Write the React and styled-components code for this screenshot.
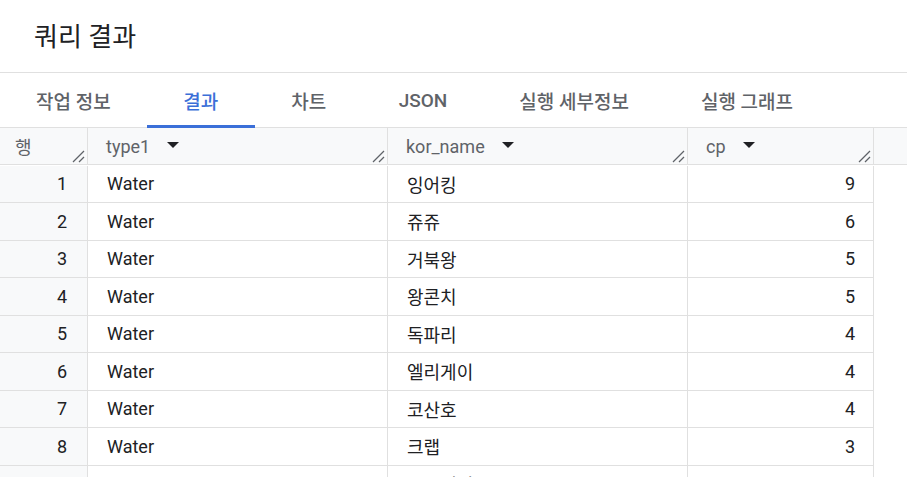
import React from 'react';
import styled, { createGlobalStyle } from 'styled-components';

const rows = [
  { type1: 'Water', name: '잉어킹', cp: 9 },
  { type1: 'Water', name: '쥬쥬', cp: 6 },
  { type1: 'Water', name: '거북왕', cp: 5 },
  { type1: 'Water', name: '왕콘치', cp: 5 },
  { type1: 'Water', name: '독파리', cp: 4 },
  { type1: 'Water', name: '엘리게이', cp: 4 },
  { type1: 'Water', name: '코산호', cp: 4 },
  { type1: 'Water', name: '크랩', cp: 3 },
  { type1: 'Water', name: '슈륙챙이', cp: 3 },
];

const tabs = ['작업 정보', '결과', '차트', 'JSON', '실행 세부정보', '실행 그래프'];

const GlobalStyle = createGlobalStyle`
  html, body {
    margin: 0;
    padding: 0;
    background: #fff;
    overflow: hidden;
  }
  body {
    font-family: Roboto, "Noto Sans CJK KR", sans-serif;
    color: #202124;
  }
`;

const Page = styled.div`
  width: 907px;
  height: 477px;
  overflow: hidden;
`;

const TitleBar = styled.div`
  display: flex;
  align-items: center;
  padding-left: 34px;
  border-bottom: 1px solid #e0e0e0;
  box-sizing: border-box;
  height: 73px;
`;

const Title = styled.h1`
  margin: 0;
  font-size: 26px;
  font-weight: 400;
  color: #202124;
  padding-bottom: 4px;
`;

const TabBar = styled.div`
  display: flex;
  height: 55px;
  border-bottom: 1px solid #e0e0e0;
  box-sizing: border-box;
`;

const Tab = styled.div`
  min-width: 108px;
  padding: 0 36px;
  box-sizing: border-box;
  display: flex;
  align-items: center;
  justify-content: center;
  font-size: 19px;
  font-weight: 500;
  color: ${(p) => (p.$active ? '#3b6fd8' : '#5f6368')};
  position: relative;
  padding-top: 1px;
  &::after {
    content: '';
    display: ${(p) => (p.$active ? 'block' : 'none')};
    position: absolute;
    left: 0;
    right: 0;
    bottom: -1px;
    height: 3px;
    background: #3b6fd8;
  }
`;

const Grid = styled.div`
  display: grid;
  grid-template-columns: 88px 300px 300px 186px 33px;
  grid-auto-rows: 37.5px;
`;

const HeadCell = styled.div`
  background: #f8f9fa;
  border-right: 1px solid #e0e0e0;
  border-bottom: 1px solid #e0e0e0;
  display: flex;
  align-items: center;
  padding-left: ${(p) => (p.$index ? '15px' : '18px')};
  font-size: 18px;
  color: #5f6368;
  position: relative;
  box-sizing: border-box;
  height: 37px;
  ${(p) => p.$index && 'align-items: flex-start; padding-top: 5px;'}
`;

const HeadFiller = styled.div`
  background: #f8f9fa;
  border-bottom: 1px solid #e0e0e0;
  height: 37px;
  box-sizing: border-box;
`;

const Caret = styled.span`
  margin-left: 17px;
  width: 0;
  height: 0;
  border-left: 6px solid transparent;
  border-right: 6px solid transparent;
  border-top: 6px solid #202124;
  margin-top: -2px;
`;

const Handle = styled.svg`
  position: absolute;
  right: 2px;
  bottom: 1px;
`;

const Cell = styled.div`
  background: ${(p) => (p.$index ? '#f8f9fa' : '#fff')};
  border-right: 1px solid #e0e0e0;
  border-bottom: 1px solid #e0e0e0;
  display: flex;
  align-items: center;
  justify-content: ${(p) => (p.$right ? 'flex-end' : 'flex-start')};
  padding: ${(p) => (p.$right ? (p.$index ? '0 20px 0 0' : '0 18px 0 0') : '0 0 0 19px')};
  font-size: 18px;
  color: #202124;
  box-sizing: border-box;
`;

const Filler = styled.div`
  background: #fff;
`;

const ResizeHandle = () => (
  <Handle width="13" height="13" viewBox="0 0 13 13">
    <path d="M1 12 L12 1" stroke="#5f6368" strokeWidth="1.3" />
    <path d="M7 12 L12 7" stroke="#5f6368" strokeWidth="1.3" />
  </Handle>
);

const Header = ({ label }) => (
  <HeadCell>
    {label}
    <Caret />
    <ResizeHandle />
  </HeadCell>
);

export default function App() {
  return (
    <Page>
      <GlobalStyle />
      <TitleBar>
        <Title>쿼리 결과</Title>
      </TitleBar>
      <TabBar>
        {tabs.map((t) => (
          <Tab key={t} $active={t === '결과'}>
            {t}
          </Tab>
        ))}
      </TabBar>
      <Grid>
        <HeadCell $index>
          행
          <ResizeHandle />
        </HeadCell>
        <Header label="type1" />
        <Header label="kor_name" />
        <Header label="cp" />
        <HeadFiller />
        {rows.map((r, i) => (
          <React.Fragment key={i}>
            <Cell $index $right>
              {i + 1}
            </Cell>
            <Cell>{r.type1}</Cell>
            <Cell>{r.name}</Cell>
            <Cell $right>{r.cp}</Cell>
            <Filler />
          </React.Fragment>
        ))}
      </Grid>
    </Page>
  );
}
